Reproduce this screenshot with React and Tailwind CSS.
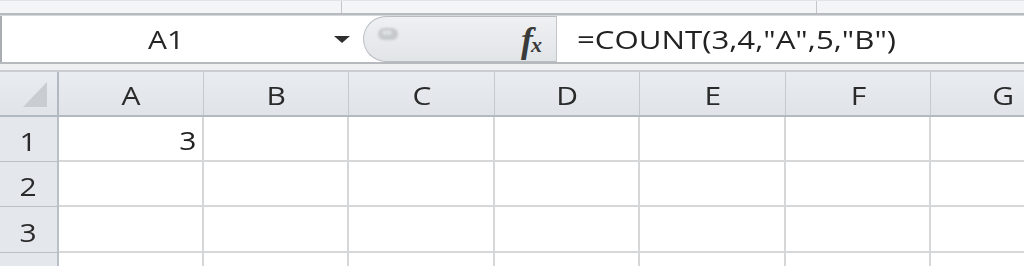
import React from 'react';

const cols = [
  { label: 'A', w: 'w-[145px]' },
  { label: 'B', w: 'w-[145px]' },
  { label: 'C', w: 'w-[146px]' },
  { label: 'D', w: 'w-[145px]' },
  { label: 'E', w: 'w-[146px]' },
  { label: 'F', w: 'w-[145px]' },
  { label: 'G', w: 'w-[145px]' },
];

const rows = [
  { n: '1', h: 'h-[45px]' },
  { n: '2', h: 'h-[45px]' },
  { n: '3', h: 'h-[46px]' },
  { n: '', h: 'h-[45px]' },
];

// Excel-ish text is wider than Open Sans, so stretch it a bit
const Txt = ({ children, origin = 'origin-center' }) => (
  <span className={`inline-block scale-x-[1.2] ${origin}`}>{children}</span>
);

const FormulaBar = () => (
  <div className="flex flex-col">
    {/* ribbon bottom strip */}
    <div className="flex h-[13px] bg-[#f4f5f7] border-t border-[#e1e3e6]">
      <div className="w-[342px] border-r border-[#c3c7cc]" />
      <div className="w-[475px] border-r border-[#c3c7cc]" />
      <div className="flex-1" />
    </div>
    <div className="h-[3px] bg-[#b7bbc0] border-b border-[#d4d7db]" />

    <div className="flex h-[46px] bg-white">
      {/* name box */}
      <div className="flex w-[363px] items-center border-l-2 border-[#a9adb2]">
        <div className="flex flex-1 justify-center pr-[4px] text-[25px] leading-none text-[#262626]">
          <Txt>A1</Txt>
        </div>
        <svg width="16" height="8" viewBox="0 0 16 8" className="mr-[13px] mt-[1px]">
          <polygon points="0,0 16,0 8,7" fill="#2e2e2e" />
        </svg>
      </div>

      {/* grip + fx */}
      <div className="relative flex w-[193px] items-center rounded-l-[23px] border border-r-0 border-[#b9bdc2] bg-gradient-to-b from-[#eef0f2] to-[#e2e5e8]">
        <div className="absolute left-[14px] top-[11px] h-[12px] w-[20px] rounded-full bg-[#c6c9cd] blur-[1px]" />
        <div className="absolute left-[18px] top-[13px] h-[5px] w-[10px] rounded-full bg-[#dcdfe2] blur-[1px]" />
        <div className="ml-auto mr-[14px] mt-[2px] flex items-baseline font-['Liberation_Serif',serif] italic font-bold text-[#3a3a3a]">
          <span className="text-[36px] leading-none">f</span>
          <span className="text-[22px] leading-none -ml-[2px]">x</span>
        </div>
      </div>

      {/* formula input */}
      <div className="flex flex-1 items-center border-l border-[#c2c6cb] pl-[20px] text-[26px] leading-none text-[#222]">
        <Txt origin="origin-left">=COUNT(3,4,"A",5,"B")</Txt>
      </div>
    </div>

    <div className="h-[2px] bg-[#b6babf]" />
    <div className="h-[6px] bg-[#eef0f2]" />
    <div className="h-[2px] bg-[#c9cdd1]" />
  </div>
);

const Grid = () => (
  <div className="flex flex-col">
    {/* column headers */}
    <div className="flex h-[45px] border-b-2 border-[#b3b9c0] bg-gradient-to-b from-[#e9ecf0] to-[#e0e4e9]">
      <div className="flex w-[59px] shrink-0 items-end justify-end border-r-2 border-[#b3b9c0] pb-[8px] pr-[10px]">
        <svg width="24" height="25" viewBox="0 0 24 25">
          <polygon points="24,0 24,25 0,25" fill="#c9cdd2" />
        </svg>
      </div>
      {cols.map((c) => (
        <div
          key={c.label}
          className={`${c.w} shrink-0 flex items-end justify-center pb-[7px] border-r border-[#c5cad0] text-[25px] leading-none text-[#2a2a2a]`}
        >
          <Txt>{c.label}</Txt>
        </div>
      ))}
    </div>

    {rows.map((r) => (
      <div key={r.n || 'x'} className={`flex ${r.h} shrink-0`}>
        <div className="flex w-[59px] shrink-0 items-end justify-center border-r-2 border-b border-[#b9bfc6] bg-[#e4e8ed] pb-[7px] text-[25px] leading-none text-[#2a2a2a]">
          <Txt>{r.n}</Txt>
        </div>
        {cols.map((c, i) => (
          <div
            key={c.label}
            className={`${c.w} shrink-0 flex items-end justify-end pb-[7px] pr-[6px] border-r-2 border-b-2 border-[#d6d7d9] bg-white text-[25px] leading-none text-[#222]`}
          >
            {r.n === '1' && i === 0 ? <Txt origin="origin-right">3</Txt> : null}
          </div>
        ))}
      </div>
    ))}
  </div>
);

export default function App() {
  return (
    <div className="h-[266px] w-[1024px] overflow-hidden bg-white font-['Open_Sans',sans-serif] font-medium">
      <FormulaBar />
      <Grid />
    </div>
  );
}
